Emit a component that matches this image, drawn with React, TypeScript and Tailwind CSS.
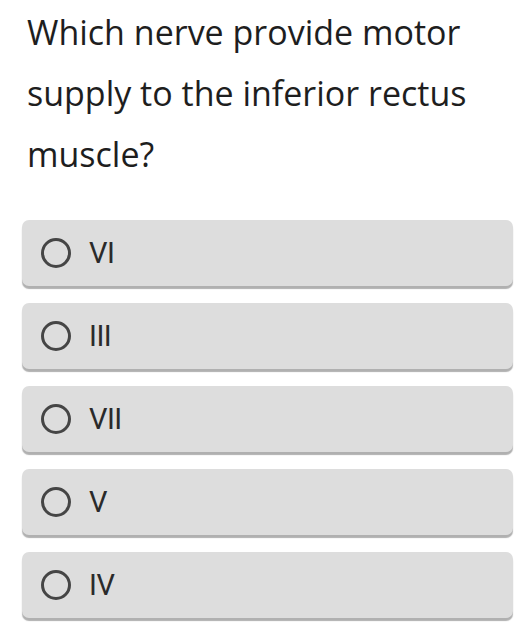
const options = ['VI', 'III', 'VII', 'V', 'IV']

function Option({ label }: { label: string }) {
  return (
    <div className="flex h-[66px] items-center rounded-[7px] bg-[#dddddd] pl-[19px] shadow-[0_3px_1px_#b0b0b0]">
      <span className="h-[30px] w-[30px] shrink-0 rounded-full border-[3.5px] border-[#454545]" />
      <span className="ml-[18px] text-[29px] leading-none tracking-[-0.5px] text-[#2a2a2a] font-['Roboto',sans-serif]">{label}</span>
    </div>
  )
}

export default function App() {
  return (
    <div className="min-h-screen bg-white px-[22px] pt-[2px] pr-[15px]">
      <p className="pl-[5px] text-[34px] leading-[61px] text-[#1e1e1e] font-['Open_Sans',sans-serif]">
        Which nerve provide motor supply to the inferior rectus muscle?
      </p>
      <div className="mt-[35px] flex flex-col gap-[17px]">
        {options.map((o) => (
          <Option key={o} label={o} />
        ))}
      </div>
    </div>
  )
}
